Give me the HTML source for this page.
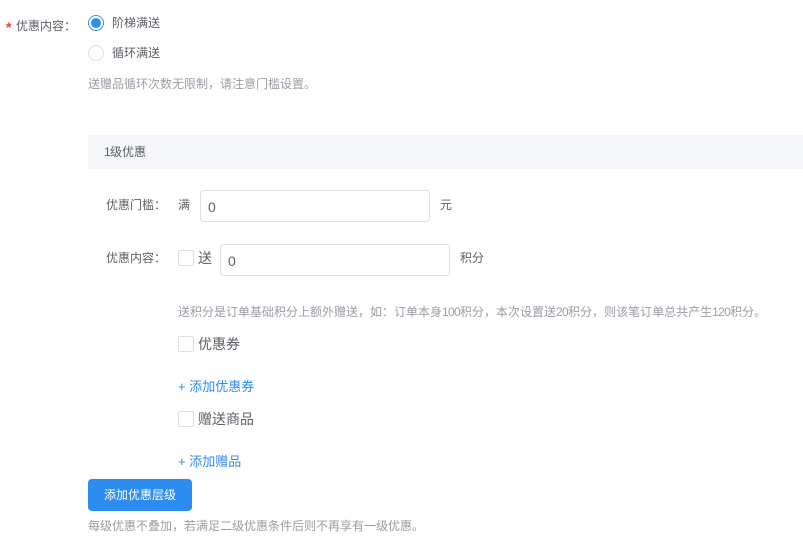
<!DOCTYPE html>
<html lang="zh-CN"><head><meta charset="utf-8"><style>
html,body{margin:0;padding:0;width:803px;height:542px;overflow:hidden;background:#fff}
body{font-family:"Liberation Sans","Noto Sans CJK SC",sans-serif;color:#5c5f66;position:relative}
.t{position:absolute;white-space:nowrap;line-height:16px;height:16px}
.f12{font-size:12px}.f13{font-size:13px}.f14{font-size:14px}
.g{color:#9a9da4}.b{color:#2d8cf0}
.n{letter-spacing:-.67px}
.cb{position:absolute;width:14px;height:14px;border:1px solid #dcdfe6;border-radius:2px;background:#fff}
.inp{position:absolute;width:228px;height:30px;border:1px solid #dcdfe6;border-radius:4px;background:#fff;font-size:14px;line-height:32px;text-indent:7px;color:#606266}
.rd{position:absolute;width:14px;height:14px;border:1px solid #dcdfe6;border-radius:50%}
</style></head><body>
<div class="t" style="left:6px;top:19px;color:#f5402c;font-size:14px;font-weight:bold">*</div>
<div class="t f12" style="left:16px;top:18px">优惠内容：</div>
<div class="rd" style="left:88px;top:15px;border:1px solid #2d8cf0"></div>
<div style="position:absolute;left:91px;top:18px;width:10px;height:10px;border-radius:50%;background:#2d8cf0"></div>
<div class="t f12" style="left:112px;top:15px">阶梯满送</div>
<div class="rd" style="left:88px;top:45px"></div>
<div class="t f12" style="left:112px;top:45px">循环满送</div>
<div class="t f12 g" style="left:88px;top:76px">送赠品循环次数无限制，请注意门槛设置。</div>
<div style="position:absolute;left:88px;top:135px;width:715px;height:34px;background:#f5f6fa"></div>
<div class="t f12" style="left:104px;top:144px"><span class="n">1</span>级优惠</div>
<div class="t f12" style="left:106px;top:197px">优惠门槛：</div>
<div class="t f12" style="left:178px;top:197px">满</div>
<div class="inp" style="left:200px;top:190px">0</div>
<div class="t f12" style="left:440px;top:197px">元</div>
<div class="t f12" style="left:106px;top:250px">优惠内容：</div>
<div class="cb" style="left:178px;top:250px"></div>
<div class="t f14" style="left:198px;top:250px">送</div>
<div class="inp" style="left:220px;top:244px">0</div>
<div class="t f12" style="left:460px;top:250px">积分</div>
<div class="t f12 g" style="left:178px;top:304px">送积分是订单基础积分上额外赠送，如：订单本身<span class="n">100</span>积分，本次设置送<span class="n">20</span>积分，则该笔订单总共产生<span class="n">120</span>积分。</div>
<div class="cb" style="left:178px;top:336px"></div>
<div class="t f14" style="left:198px;top:336px">优惠券</div>
<div class="t f13 b" style="left:178px;top:379px">+ 添加优惠券</div>
<div class="cb" style="left:178px;top:411px"></div>
<div class="t f14" style="left:198px;top:411px">赠送商品</div>
<div class="t f13 b" style="left:178px;top:454px">+ 添加赠品</div>
<div class="f12" style="position:absolute;left:88px;top:479px;width:104px;height:32px;line-height:32px;background:#2d8cf0;border-radius:4px;color:#fff;text-align:center">添加优惠层级</div>
<div class="t f12 g" style="left:88px;top:518px">每级优惠不叠加，若满足二级优惠条件后则不再享有一级优惠。</div>
</body></html>
